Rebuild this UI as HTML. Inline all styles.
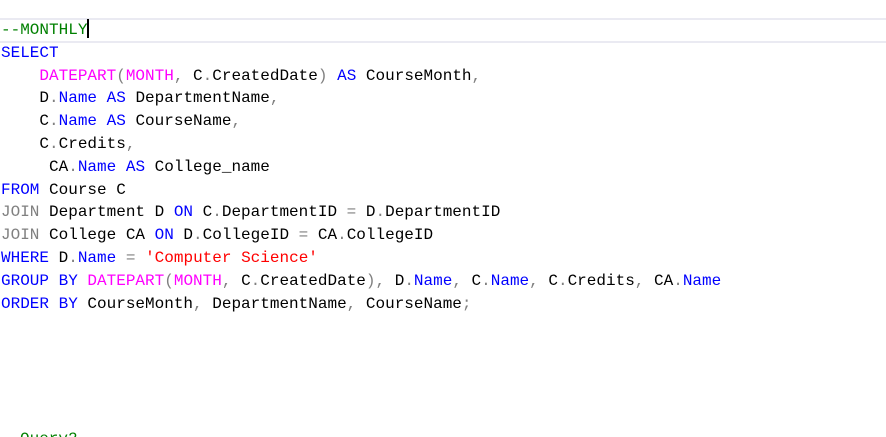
<!DOCTYPE html>
<html><head><style>
html,body{margin:0;background:#fff;width:886px;height:437px;overflow:hidden;position:relative}
.cur{position:absolute;left:0;top:18px;width:886px;height:21px;border-top:2px solid #eaeaf2;border-bottom:2px solid #eaeaf2;box-sizing:content-box}
pre{position:absolute;left:1px;top:19px;margin:0;font-family:"Liberation Mono",monospace;font-size:16px;line-height:22.8px;color:#000}
.k{color:#0000ff}.f{color:#ff00ff}.g{color:#808080}.c{color:#008000}.s{color:#ff0000}
.caret{display:inline-block;width:1.5px;height:19px;background:#000;vertical-align:-4px}
</style></head><body>
<div class="cur"></div>
<pre><span class="c">--MONTHLY</span><span class="caret"></span>
<span class="k">SELECT</span>
    <span class="f">DATEPART</span><span class="g">(</span><span class="f">MONTH</span><span class="g">,</span> C<span class="g">.</span>CreatedDate<span class="g">)</span> <span class="k">AS</span> CourseMonth<span class="g">,</span>
    D<span class="g">.</span><span class="k">Name</span> <span class="k">AS</span> DepartmentName<span class="g">,</span>
    C<span class="g">.</span><span class="k">Name</span> <span class="k">AS</span> CourseName<span class="g">,</span>
    C<span class="g">.</span>Credits<span class="g">,</span>
     CA<span class="g">.</span><span class="k">Name</span> <span class="k">AS</span> College_name
<span class="k">FROM</span> Course C
<span class="g">JOIN</span> Department D <span class="k">ON</span> C<span class="g">.</span>DepartmentID <span class="g">=</span> D<span class="g">.</span>DepartmentID
<span class="g">JOIN</span> College CA <span class="k">ON</span> D<span class="g">.</span>CollegeID <span class="g">=</span> CA<span class="g">.</span>CollegeID
<span class="k">WHERE</span> D<span class="g">.</span><span class="k">Name</span> <span class="g">=</span> <span class="s">'Computer Science'</span>
<span class="k">GROUP BY</span> <span class="f">DATEPART</span><span class="g">(</span><span class="f">MONTH</span><span class="g">,</span> C<span class="g">.</span>CreatedDate<span class="g">),</span> D<span class="g">.</span><span class="k">Name</span><span class="g">,</span> C<span class="g">.</span><span class="k">Name</span><span class="g">,</span> C<span class="g">.</span>Credits<span class="g">,</span> CA<span class="g">.</span><span class="k">Name</span>
<span class="k">ORDER BY</span> CourseMonth<span class="g">,</span> DepartmentName<span class="g">,</span> CourseName<span class="g">;</span>
</pre>
<div style="position:absolute;left:20px;top:430px;font-family:'Liberation Mono',monospace;font-size:16px;color:#008000">Query2</div>
</body></html>
